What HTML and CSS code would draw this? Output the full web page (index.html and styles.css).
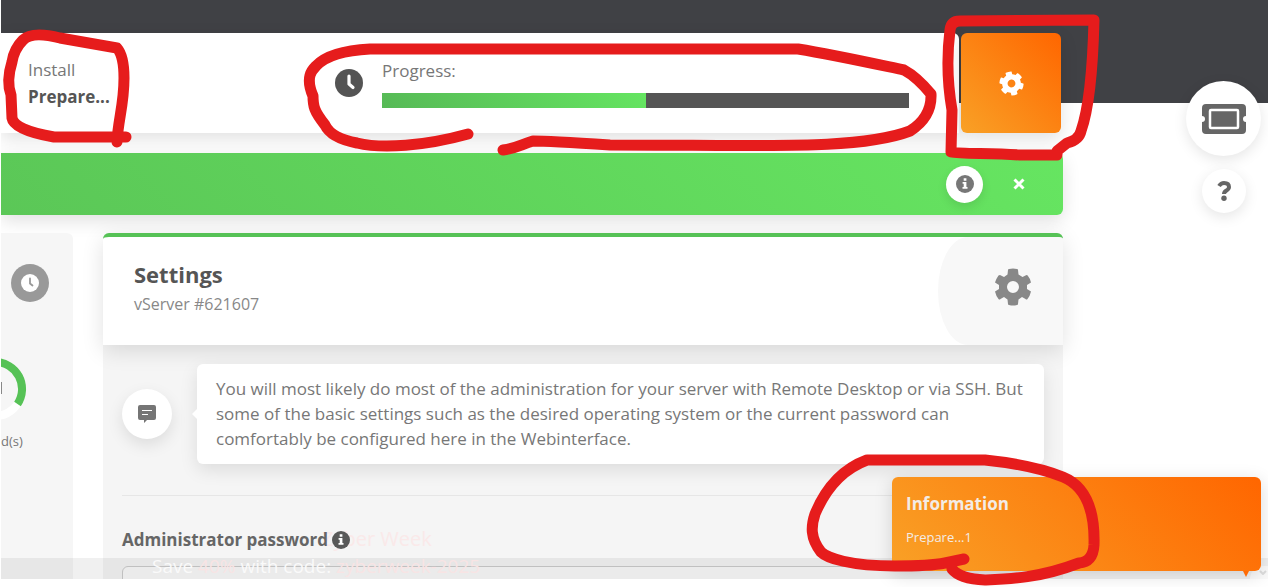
FILE: index.html
```html
<!DOCTYPE html>
<html lang="en">
<head>
    <meta charset="UTF-8">
    <meta name="viewport" content="width=device-width, initial-scale=1.0">
    <title>vServer Settings</title>
    <link rel="stylesheet" href="styles.css">
</head>
<body>
    <div class="page">
        <div class="hero"></div>

        <div class="content">
            <div class="status-row">
                <section class="status-card">
                    <div class="status-text">
                        <span>Install</span>
                        <strong>Prepare...</strong>
                    </div>
                    <svg class="status-clock" viewBox="0 0 28 28" width="28" height="28">
                        <circle cx="14" cy="14" r="14" fill="#545454"/>
                        <path d="M14 7v8l4 3.500" fill="none" stroke="#fff" stroke-width="3.200" stroke-linecap="round" stroke-linejoin="round"/>
                    </svg>
                    <div class="status-progress">
                        <label for="progress">Progress:</label>
                        <progress id="progress" value="50" max="100"></progress>
                    </div>
                </section>
                <button class="gear-button" type="button" aria-label="Server settings">
                    <svg viewBox="0 0 512 512" width="25" height="25"><path fill="#fff" d="M487.400 315.700l-42.600-24.600c4.300-23.200 4.300-47 0-70.200l42.600-24.600c4.900-2.800 7.100-8.600 5.500-14-11.100-35.600-30-67.800-54.700-94.600-3.800-4.100-10-5.100-14.800-2.300L380.800 110c-17.900-15.400-38.500-27.300-60.800-35.100V25.800c0-5.600-3.900-10.500-9.400-11.700-36.700-8.200-74.300-7.800-109.200 0-5.500 1.200-9.400 6.100-9.400 11.700V75c-22.200 7.900-42.800 19.800-60.800 35.100L88.700 85.500c-4.900-2.800-11-1.900-14.800 2.300-24.700 26.700-43.600 58.900-54.700 94.600-1.700 5.400.6 11.200 5.500 14L67.300 221c-4.300 23.200-4.300 47 0 70.200l-42.600 24.600c-4.900 2.800-7.100 8.600-5.500 14 11.100 35.600 30 67.800 54.700 94.600 3.800 4.100 10 5.100 14.800 2.300l42.600-24.600c17.900 15.400 38.500 27.300 60.800 35.100v49.200c0 5.600 3.900 10.500 9.400 11.700 36.700 8.200 74.300 7.800 109.200 0 5.500-1.200 9.400-6.100 9.400-11.700v-49.200c22.200-7.900 42.800-19.800 60.800-35.100l42.600 24.600c4.900 2.800 11 1.900 14.800-2.300 24.700-26.700 43.600-58.900 54.700-94.600 1.500-5.500-.7-11.300-5.600-14.100zM256 336c-44.100 0-80-35.900-80-80s35.900-80 80-80 80 35.900 80 80-35.900 80-80 80z" transform="rotate(-15 256 256)"/></svg>
                </button>
            </div>

            <div class="alert">
                <button class="alert-info" type="button" aria-label="Details">
                    <svg viewBox="0 0 18 18" width="18" height="18"><circle cx="9" cy="9" r="9" fill="#777"/><path d="M7.700 3.300h2.700v2.500H7.700zM6.600 7h3.800v5h1.100v1.700h-5V12h1.200V8.700H6.600z" fill="#fff"/></svg>
                </button>
                <button class="alert-close" type="button" aria-label="Close">
                    <svg viewBox="0 0 12 12" width="12" height="12"><path d="M1.500 1.500l9 9M10.500 1.500l-9 9" stroke="#fff" stroke-width="3"/></svg>
                </button>
            </div>

            <div class="columns">
                <aside class="sidebar">
                    <span class="sidebar-clock">
                        <svg viewBox="0 0 18 18" width="18" height="18"><circle cx="9" cy="9" r="9" fill="#fff"/><path d="M9 4.500v5l2.500 2" fill="none" stroke="#999" stroke-width="1.800" stroke-linecap="round"/></svg>
                    </span>
                    <svg class="ring" viewBox="0 0 26 64" width="26" height="64">
                        <circle cx="-6" cy="32" r="27" fill="none" stroke="#fff" stroke-width="8"/>
                        <path d="M-6 5a27 27 0 0 1 22.500 42" fill="none" stroke="#56c256" stroke-width="8"/>
                        <path d="M0 25h1v12H0z" fill="#888"/>
                    </svg>
                    <span class="sidebar-unit">d(s)</span>
                    <div class="sidebar-foot"></div>
                </aside>

                <main class="panel">
                    <header class="panel-header">
                        <div class="panel-title">
                            <h1>Settings</h1>
                            <p>vServer #621607</p>
                        </div>
                        <div class="panel-icon">
                            <svg viewBox="0 0 36 38" width="36" height="38">
                                <path fill="#888" fill-rule="evenodd" d="M14 1Q18 0 22 1Q23 1 23 2L23.500 6.500L27.500 9L31.500 7Q32.500 7 33 8Q35.500 11 36 14.500L32 17V21L36 23.500Q35 28 32.500 31Q31.500 32 30.500 31L27 29L23.500 31.500L23 36Q23 37 22 37Q18 38 14 37Q13 37 13 36L12.500 31.500L9 29L5.500 31Q4.500 32 3.500 31Q1 28 0 23.500L4 21V17L0 14.500Q1 11 3.500 7.500Q4 7 5 7L9 9L12.500 6.500L13 2Q13 1 14 1ZM18 13A6 6 0 1 0 18 25A6 6 0 1 0 18 13Z"/>
                            </svg>
                        </div>
                    </header>

                    <div class="panel-body">
                        <div class="hint">
                            <span class="hint-icon">
                                <svg viewBox="0 0 18 18" width="18" height="18"><path d="M2 0h14q2 0 2 2v11q0 2-2 2H9l-3 3v-3H2q-2 0-2-2V2q0-2 2-2z" fill="#757575"/><path d="M4 5.500h10M4 9.500h6" stroke="#fff" stroke-width="1.200"/></svg>
                            </span>
                            <p class="hint-text">You will most likely do most of the administration for your server with Remote Desktop or via SSH. But some of the basic settings such as the desired operating system or the current password can comfortably be configured here in the Webinterface.</p>
                        </div>
                        <hr>
                        <div class="field">
                            <label for="password">Administrator password
                                <svg viewBox="0 0 18 18" width="18" height="18"><circle cx="9" cy="9" r="9" fill="#595959"/><path d="M7.700 3.300h2.700v2.500H7.700zM6.600 7h3.800v5h1.100v1.700h-5V12h1.200V8.700H6.600z" fill="#fff"/></svg>
                            </label>
                            <input type="password" id="password">
                        </div>
                    </div>
                </main>
            </div>
        </div>

        <div class="promo-title">Zyber Week</div>
        <div class="promo-bar">Save <em>40%</em> with code: <em>zyberweek-2025</em></div>
        <button class="promo-toggle" type="button" aria-label="Hide offer">
            <svg viewBox="0 0 8 5" width="8" height="5"><path d="M1 1l3 3 3-3" fill="none" stroke="#ddd" stroke-width="2"/></svg>
        </button>
    </div>

    <div class="floating">
        <button class="ticket-button" type="button" aria-label="Tickets">
            <svg viewBox="0 0 44 30" width="44" height="30">
                <path d="M4 0h36q4 0 4 4v8a3 3 0 0 0 0 6v8q0 4-4 4H4q-4 0-4-4v-8a3 3 0 0 0 0-6V4q0-4 4-4z" fill="#666"/>
                <rect x="8" y="6" width="28" height="18" rx="1" fill="#666" stroke="#fff" stroke-width="2.500"/>
            </svg>
        </button>
        <button class="help-button" type="button" aria-label="Help">
            <svg viewBox="0 0 14 20" width="14" height="20"><path d="M2 5Q4 2 7 2Q12 2 12 6Q12 8 9.500 9.500Q7 11 7 13" fill="none" stroke="#666" stroke-width="4"/><circle cx="7" cy="17.300" r="2.700" fill="#666"/></svg>
        </button>
    </div>

    <div class="toast" role="status">
        <strong>Information</strong>
        <span>Prepare...1</span>
    </div>

    <svg class="marks" viewBox="0 0 1268 587">
        <path d="M117 142C118 120 124 105 124 78Q124 56 117 48L60 38Q32 31 23 40Q14 49 12 62Q6 81 11 95L12 118Q14 130 54 137H126"/>
        <path d="M468 134C425 146 382 149 357 143Q331 138 325 125C314 111 313 106 313 96C305 77 312 70 316 66Q330 51 370 49H798C835 55 880 65 904 70Q917 77 931 94Q932 117 910 131C860 150 770 145 610 145Q548 141 533 141C520 145 517 148 503 150"/>
        <path d="M1057 155H1020C990 153 960 154 951 152L952 110Q945 70 950 30Q951 21 960 21L1094 20Q1092 100 1081 131Q1079 140 1067 143L1057 151V155"/>
        <path d="M964 559L945 563Q930 566 895 566C850 566 827 558 821 552C810 538 811 526 815 514C825 490 840 470 867 460H985Q1033 465 1063 477C1085 486 1095 510 1094 545Q1093 562 1079 563C1040 578 1010 579 985 580Q960 579 952 569"/>
    </svg>
</body>
</html>
```
FILE: styles.css
```css
* {
    box-sizing: border-box;
}

body {
    margin: 0;
    font-family: "Open Sans", "Noto Sans", sans-serif;
    font-size: 17px;
    line-height: 25px;
    color: #777;
    background: #fff;
    overflow: hidden;
}

button {
    border: 0;
    padding: 0;
    display: flex;
    align-items: center;
    justify-content: center;
    cursor: pointer;
}

svg {
    display: block;
    flex-shrink: 0;
}

.page {
    position: relative;
    display: flex;
    flex-direction: column;
    height: calc(100vh - 8px);
    margin-left: 1px;
    overflow: hidden;
}

.hero {
    flex: 0 0 103px;
    background: #404145;
}

.content {
    position: relative;
    display: flex;
    flex-direction: column;
    flex: 1;
    margin: -70px 205px 0 0;
}

.status-row {
    display: flex;
    gap: 2px;
    height: 100px;
    margin: 0 2px 20px 0;
}

.status-card {
    display: flex;
    flex: 1;
    align-items: center;
    padding: 0 50px 0 27px;
    background: #fff;
    border-radius: 0 6px 0 0;
    box-shadow: 0 6px 18px rgba(0, 0, 0, 0.12);
}

.status-text {
    display: flex;
    flex-direction: column;
    flex: 0 0 307px;
    gap: 2px;
}

.status-text strong {
    color: #555;
}

.status-clock {
    margin-right: 19px;
}

.status-progress {
    flex: 1;
}

.status-progress label {
    display: block;
    margin-bottom: 10px;
}

progress {
    display: block;
    width: 100%;
    height: 15px;
    border: 0;
    appearance: none;
}

progress::-webkit-progress-bar {
    background: #555;
}

progress::-webkit-progress-value {
    background: linear-gradient(45deg, #56b956, #65e561);
}

.gear-button {
    width: 100px;
    border-radius: 6px;
    background: linear-gradient(45deg, #f9a126, #ff6600);
    box-shadow: 0 6px 18px rgba(0, 0, 0, 0.12);
}

.alert {
    display: flex;
    align-items: center;
    justify-content: flex-end;
    gap: 30px;
    height: 62px;
    margin-bottom: 18px;
    padding-right: 38px;
    background: linear-gradient(45deg, #5bc757, #66e561);
    border-radius: 0 6px 6px 0;
    box-shadow: 0 6px 18px rgba(0, 0, 0, 0.12);
}

.alert-info {
    width: 37px;
    height: 37px;
    background: #fff;
    border-radius: 50%;
    box-shadow: 0 4px 10px rgba(0, 0, 0, 0.1);
}

.alert-close {
    background: none;
}

.columns {
    display: flex;
    gap: 30px;
    flex: 1;
}

.sidebar {
    display: flex;
    flex-direction: column;
    width: 72px;
    background: #f6f6f6;
    border-radius: 0 6px 0 0;
}

.sidebar-clock {
    display: flex;
    align-items: center;
    justify-content: center;
    width: 38px;
    height: 38px;
    margin: 31px 0 55px 10px;
    background: #999;
    border-radius: 50%;
}

.sidebar-unit {
    margin-top: 8px;
    font-size: 13px;
}

.sidebar-foot {
    height: 20px;
    margin-top: auto;
    background: #62db5d;
}

.panel {
    flex: 1;
    background: #f5f5f5;
    border-radius: 6px 6px 0 0;
}

.panel-header {
    display: flex;
    justify-content: space-between;
    height: 112px;
    border-top: 4px solid #56c256;
    border-radius: 6px 6px 0 0;
    background: #fff;
    box-shadow: 0 6px 22px rgba(0, 0, 0, 0.12);
    overflow: hidden;
}

.panel-title {
    padding: 24px 31px;
}

.panel-title h1 {
    margin: 0 0 5px;
    font-size: 22px;
    line-height: 26px;
    color: #555;
}

.panel-title p {
    margin: 0;
    font-size: 16px;
    line-height: 24px;
    color: #888;
}

.panel-icon {
    display: flex;
    align-items: center;
    justify-content: center;
    width: 125px;
    padding-left: 25px;
    padding-bottom: 8px;
    background: #f8f8f8;
    border-radius: 30px 0 0 30px / 50% 0 0 50%;
}

.panel-body {
    padding: 19px 19px 0;
}

.hint {
    display: flex;
    align-items: center;
    gap: 25px;
}

.hint-icon {
    display: flex;
    flex: 0 0 50px;
    align-items: center;
    justify-content: center;
    height: 50px;
    background: #fff;
    border-radius: 50%;
    box-shadow: 0 6px 16px rgba(0, 0, 0, 0.1);
}

.hint-text {
    position: relative;
    flex: 1;
    margin: 0;
    padding: 12px 19px 13px;
    background: #fff;
    border-radius: 6px;
    box-shadow: 0 6px 18px rgba(0, 0, 0, 0.1);
}

.hint-text::before {
    content: "";
    position: absolute;
    top: 45px;
    left: -5px;
    border: 5px solid transparent;
    border-left: 0;
    border-right-color: #fff;
}

hr {
    height: 1px;
    margin: 31px 0;
    border: 0;
    background: #e6e6e6;
}

.field label {
    position: relative;
    z-index: 1;
    display: flex;
    align-items: center;
    gap: 4px;
    margin-bottom: 14px;
    font-weight: bold;
    color: #666;
}

.field input {
    width: 100%;
    height: 40px;
    border: 1px solid #ccc;
    border-radius: 6px;
    background: #fafafa;
}

.promo-title {
    position: absolute;
    left: 321px;
    bottom: 28px;
    font-size: 20px;
    color: #fae9e9;
}

.promo-bar {
    position: absolute;
    left: 0;
    right: 0;
    bottom: 0;
    height: 21px;
    padding-left: 151px;
    font-size: 19px;
    line-height: 16px;
    color: #fafafa;
    background: rgba(0, 0, 0, 0.06);
}

.promo-bar em {
    font-style: normal;
    color: #f8e4e4;
}

.promo-toggle {
    position: absolute;
    right: 0;
    bottom: 0;
    width: 18px;
    height: 13px;
    padding-left: 8px;
    background: #fafafa;
    border-radius: 14px 0 0 0;
}

.floating {
    position: absolute;
    top: 81px;
    right: 7px;
    display: flex;
    flex-direction: column;
    align-items: center;
    gap: 13px;
}

.floating button {
    background: #fff;
    border-radius: 50%;
    box-shadow: 0 4px 14px rgba(0, 0, 0, 0.1);
}

.ticket-button {
    width: 75px;
    height: 75px;
}

.help-button {
    width: 44px;
    height: 44px;
}

.toast {
    position: absolute;
    right: 7px;
    bottom: 16px;
    display: flex;
    flex-direction: column;
    gap: 9px;
    width: 369px;
    height: 94px;
    padding: 14px;
    color: #f3ece6;
    border-radius: 6px;
    background: linear-gradient(45deg, #f9a126, #ff6600);
    box-shadow: 0 4px 18px rgba(0, 0, 0, 0.15);
}

.toast span {
    font-size: 13px;
}

.toast::after {
    content: "";
    position: absolute;
    top: 100%;
    right: 12px;
    border: 3px solid transparent;
    border-top: 6px solid #ff6a03;
    border-bottom: 0;
}

.marks {
    position: absolute;
    top: 0;
    left: 0;
    width: 100%;
    fill: none;
    stroke: #e61c1c;
    stroke-width: 11;
    stroke-linecap: round;
    stroke-linejoin: round;
    pointer-events: none;
}
```
